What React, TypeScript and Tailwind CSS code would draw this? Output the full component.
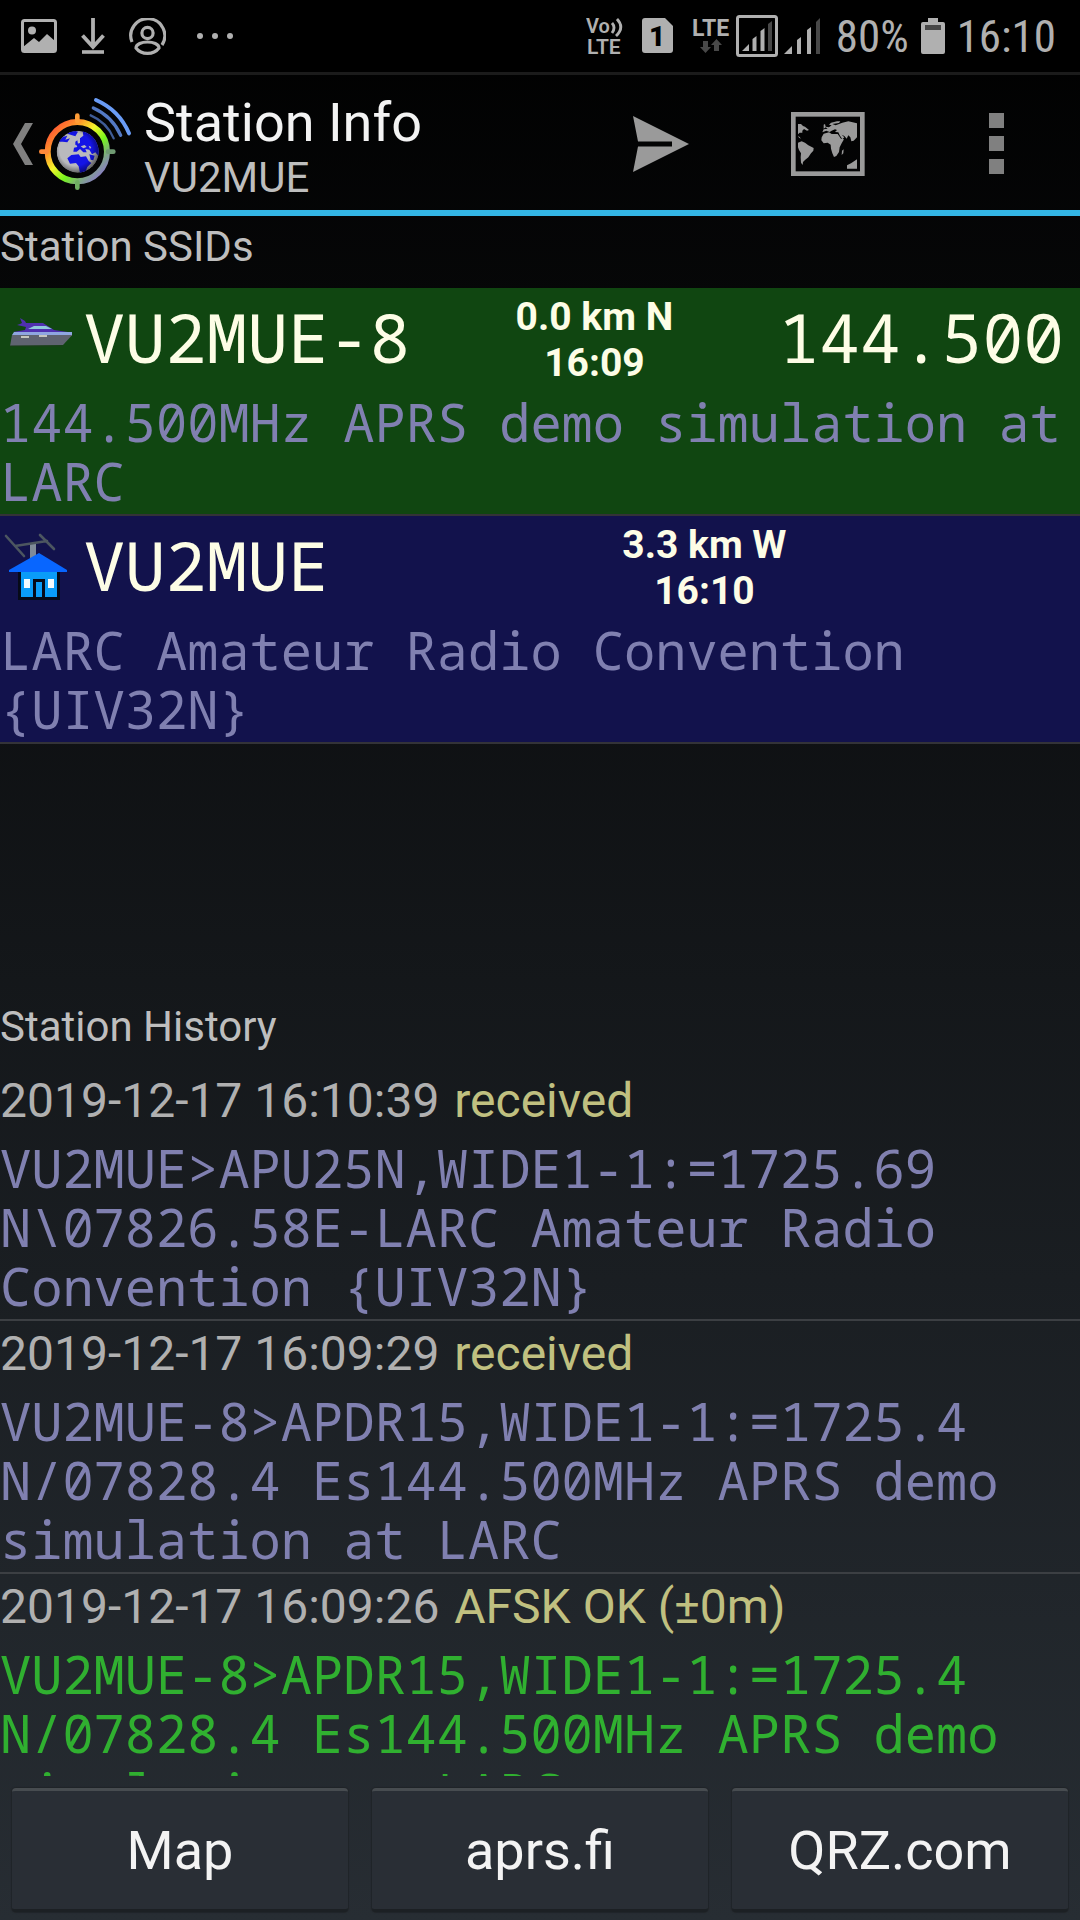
import React from 'react';
import clsx from 'clsx';

interface Station {
    call: string;
    distance: string;
    time: string;
    frequency?: string;
    comment: string;
    icon: React.ReactNode;
    own?: boolean;
}

interface Packet {
    date: string;
    status: string;
    raw: string;
    own?: boolean;
}

const BoatIcon = () => (
    <svg viewBox="0 0 72 72" className="size-[72px] shrink-0" aria-hidden="true">
        <path d="M10 42 L12 31 L74 29 L63 41 Z" fill="#5f6370" />
        <path d="M12 31 L14 28 L72 28 L74 29 L72 31 Z" fill="#8fa6e0" />
        <path d="M13 28 L25 26 L26 23 L17 21 L20 20 L22 19 L20 14 L25 17 L26 19 L43 19 L54 26 L68 28 Z" fill="#5030b0" />
        <path d="M28 25 L34 22 L46 22 L52 25 Z" fill="#8fc8dc" />
        <path d="M21 33 h8 M39 32 h8" stroke="#e8e8d8" strokeWidth="1.4" />
        <path d="M10 42 L63 42" stroke="#1d3a1d" strokeWidth="1" />
    </svg>
);

const HouseIcon = () => (
    <svg viewBox="0 0 72 72" className="size-[72px] shrink-0" aria-hidden="true">
        <rect x="30" y="12" width="6" height="14" fill="#7f8a99" />
        <path d="M6 4 L24 24 M40 3 L54 17 M15 14 L47 9" stroke="#4c5660" strokeWidth="2.6" strokeLinecap="round" fill="none" />
        <rect x="18" y="38" width="42" height="30" fill="#060a18" />
        <rect x="21" y="38" width="36" height="27" fill="#0a9cf8" />
        <path d="M39 21 L67 38 V40 H9 V38 Z" fill="#0866ff" />
        <rect x="24" y="47" width="6" height="9" fill="#f4fbff" />
        <rect x="48" y="47" width="6" height="9" fill="#f4fbff" />
        <path d="M34.500 66 V48.500 H43.500 V66" stroke="#060a18" strokeWidth="3" fill="none" />
    </svg>
);

const AppLogo = () => (
    <svg viewBox="27 45 285 285" className="size-[95px]" aria-hidden="true">
        <defs>
            <linearGradient id="ring" gradientUnits="userSpaceOnUse" x1="70" y1="140" x2="214" y2="284">
                <stop offset="0" stopColor="#ff5a32" />
                <stop offset="0.22" stopColor="#ff9a2a" />
                <stop offset="0.42" stopColor="#f4f52a" />
                <stop offset="0.64" stopColor="#76f51c" />
                <stop offset="0.84" stopColor="#7fa588" />
                <stop offset="1" stopColor="#8a7cc8" />
            </linearGradient>
            <radialGradient id="shade" cx="0.45" cy="0.45" r="0.55">
                <stop offset="0.7" stopColor="#000" stopOpacity="0" />
                <stop offset="1" stopColor="#000" stopOpacity="0.45" />
            </radialGradient>
            <clipPath id="globe">
                <circle cx="143" cy="212" r="63" />
            </clipPath>
        </defs>
        <circle cx="142" cy="212" r="89" fill="none" stroke="url(#ring)" strokeWidth="18" />
        <g strokeWidth="14" strokeLinecap="round">
            <path d="M142 104 V120" stroke="#ff9d38" />
            <path d="M34 212 H50" stroke="#ff8a3a" />
            <path d="M234 212 H250" stroke="#6f9a72" />
            <path d="M142 304 V320" stroke="#6fae62" />
        </g>
        <g clipPath="url(#globe)">
            <circle cx="143" cy="212" r="63" fill="#b9b9bd" />
            <path
                d="M84 182 L98 168 L112 164 L106 176 L120 172 L112 184 L98 182 Z M112 158 L128 148 L144 152 L136 166 L124 162 Z M150 172 L160 164 L158 150 L178 148 L210 178 L212 232 L196 214 L186 220 L178 206 L166 204 L170 214 L160 214 L150 204 L140 212 L130 212 L132 200 L142 198 L138 190 L150 186 Z M136 182 L142 178 L144 190 L136 192 Z M112 232 L124 222 L146 220 L152 228 L168 226 L176 240 L184 246 L172 258 L166 274 L150 276 L146 256 L138 246 L120 248 Z M178 220 L194 224 L190 238 L182 236 Z"
                fill="#1414e6"
            />
            <path d="M152 196 L164 192 L170 198 L160 202 Z M176 194 L184 198 L180 204 Z" fill="#b9b9bd" />
            <circle cx="143" cy="212" r="63" fill="url(#shade)" />
        </g>
        <g fill="none" strokeLinecap="round">
            <path d="M198 57 A190 190 0 0 1 297 157" stroke="#6a9cf6" strokeWidth="12" />
            <path d="M190 81 A160 160 0 0 1 272 163" stroke="#5379c4" strokeWidth="10" />
            <path d="M182 103 A130 130 0 0 1 251 172" stroke="#3f5c96" strokeWidth="7" />
        </g>
    </svg>
);

const StatusBar = () => (
    <div className="flex h-[72px] shrink-0 items-center justify-between bg-black pr-6 pl-[21px] text-[#b0b0b0]">
        <div className="flex items-center gap-6">
            <svg viewBox="0 0 36 36" className="size-9" aria-label="Screenshot saved">
                <rect x="1.500" y="2.500" width="33" height="31" rx="2" fill="none" stroke="currentColor" strokeWidth="3" />
                <circle cx="11" cy="12.500" r="4" fill="currentColor" />
                <path d="M2 29 L13 20 L18 24 L26 16 L34 23 V33 H2 Z" fill="currentColor" />
            </svg>
            <svg viewBox="0 0 24 36" className="h-9 w-6" aria-label="Download">
                <path d="M12 0 V29 M1.500 17.500 L12 29 L22.500 17.500" fill="none" stroke="currentColor" strokeWidth="3.800" />
                <path d="M1 34 H23" stroke="currentColor" strokeWidth="3.600" />
            </svg>
            <svg viewBox="0 0 37 37" className="size-[37px]" aria-label="Contact">
                <g fill="none" stroke="currentColor" strokeWidth="3.200">
                    <path d="M3 24 A17 17 0 1 1 33 27" />
                    <circle cx="18.500" cy="15" r="5.600" />
                    <path d="M7 30 C7 26 13 24 18.500 24 C24 24 30 26 30 30 C27 34 23 35.400 18.500 35.400 C14 35.400 10 34 7 30 Z" />
                </g>
            </svg>
            <svg viewBox="0 0 48 12" className="h-3 w-12" aria-label="More notifications">
                <circle cx="10" cy="6" r="3" fill="currentColor" />
                <circle cx="25" cy="6" r="3" fill="currentColor" />
                <circle cx="40" cy="6" r="3" fill="currentColor" />
            </svg>
        </div>
        <div className="flex items-center font-['Roboto_Condensed',Roboto,sans-serif] text-[45px] leading-none">
            <svg viewBox="0 -6 40 48" className="mr-4 h-12 w-10 font-[Roboto,sans-serif]" aria-label="VoLTE">
                <text x="0" y="15" fontSize="20" fontWeight="600" fill="currentColor">Vo</text>
                <text x="1" y="36" fontSize="21" fontWeight="600" fill="currentColor">LTE</text>
                <path d="M26 5 Q30 9.500 26 15 M31 1 Q39 9.500 30 18" fill="none" stroke="currentColor" strokeWidth="2.800" />
            </svg>
            <svg viewBox="0 -6 32 48" className="mr-[18px] h-12 w-8 font-[Roboto,sans-serif]" aria-label="SIM 1">
                <path d="M3 0 H23 L31 8 V32 Q31 35 28 35 H3 Q0 35 0 32 V3 Q0 0 3 0 Z" fill="currentColor" />
                <text x="7" y="28" fontSize="28" fontWeight="900" fill="#000">1</text>
            </svg>
            <svg viewBox="0 -6 40 48" className="mr-1 h-12 w-10 font-[Roboto,sans-serif]" aria-label="LTE">
                <text x="0" y="18" fontSize="23" fontWeight="700" fill="currentColor">LTE</text>
                <path d="M11 23 H16 V29 H19 L13.500 35 L8 29 H11 Z M22 33 H27 V27 H30 L24.500 21 L19 27 H22 Z" fill="#484848" />
            </svg>
            <svg viewBox="0 0 42 42" className="mr-1.5 size-[42px]" aria-label="Signal, SIM 1">
                <rect x="1.500" y="1.500" width="39" height="39" rx="2" fill="none" stroke="currentColor" strokeWidth="3" />
                <path d="M6 36 L13 29 V36 Z M16.500 36 V24 L20.500 21 V36 Z M24.500 36 V16 L28.500 13 V36 Z" fill="currentColor" />
                <path d="M32 36 V9 L36 6 V36 Z" fill="#484848" />
            </svg>
            <svg viewBox="0 0 36 36" className="mr-4 size-9" aria-label="Signal, SIM 2">
                <path d="M0 36 L8 28 V36 Z M13 36 V22 L17 19 V36 Z M23 36 V12 L27 9 V36 Z" fill="currentColor" />
                <path d="M32 36 V4 L36 0 V36 Z" fill="#484848" />
            </svg>
            <span>80%</span>
            <svg viewBox="0 0 24 36" className="mx-3 h-9 w-6" aria-label="Battery">
                <path d="M7 0 H17 V4 H22 Q24 4 24 6 V34 Q24 36 22 36 H2 Q0 36 0 34 V6 Q0 4 2 4 H7 Z" fill="currentColor" />
                <rect x="4" y="7" width="16" height="5" fill="#484848" />
            </svg>
            <span>16:10</span>
        </div>
    </div>
);

const ActionBar = () => (
    <header className="flex h-36 shrink-0 items-center border-t-[3px] border-b-[6px] border-t-[#1b1b1b] border-b-[#33b5e5]">
        <button type="button" aria-label="Navigate up" className="flex items-center pt-0.5 pl-3">
            <svg viewBox="0 0 22 42" className="h-[42px] w-[22px]">
                <path d="M13 0 H21 L9 21 L21 42 H13 L1 21 Z" fill="#808080" />
            </svg>
            <span className="ml-[5px]">
                <AppLogo />
            </span>
        </button>
        <div className="flex-1 pt-2 pl-2.5">
            <h1 className="text-[54px] leading-[61px] text-[#f3f3f3]">Station Info</h1>
            <p className="text-[42px] leading-[49px] text-[#bebebe]">VU2MUE</p>
        </div>
        <button type="button" aria-label="Send message" className="flex w-[168px] justify-center pt-0.5 pl-0.5">
            <svg viewBox="0 0 56 56" className="size-14">
                <path d="M0 0 L56 28 L0 56 L5 30.500 H39 V25.500 H5 Z" fill="#9a9a9a" />
            </svg>
        </button>
        <button type="button" aria-label="Show on map" className="flex w-[168px] justify-center pt-0.5">
            <svg viewBox="36 36 222 192" className="h-16 w-[74px]" fill="#9a9a9a">
                <rect x="43" y="43" width="207" height="178" fill="none" stroke="#9a9a9a" strokeWidth="14" />
                <path d="M57 72 L66 72 L72 78 L78 80 L90 90 L84 92 L75 87 L70 92 L70 98 L62 98 L57 103 Z M57 107 L62 111 L66 116 L60 113 Z" />
                <path d="M57 128 L68 124 L78 128 L88 136 L104 144 L103 152 L96 160 L88 172 L78 180 L72 186 L71 195 L66 188 L65 172 L66 160 L60 150 L57 142 Z" />
                <path d="M128 112 L134 101 L150 97 L158 102 L176 102 L186 116 L195 118 L188 130 L182 142 L180 156 L172 168 L165 171 L160 160 L156 146 L155 134 L146 128 L134 130 L127 121 Z M189 152 L194 148 L193 160 L188 165 Z" />
                <path d="M130 97 L134 88 L146 86 L140 82 L134 86 L134 74 L138 72 L140 80 L150 82 L158 76 L150 74 L156 68 L174 64 L184 64 L180 69 L160 72 L170 76 L190 68 L208 64 L234 70 L234 112 L224 122 L217 124 L214 112 L208 106 L203 116 L196 108 L188 104 L196 112 L190 118 L182 106 L178 97 L168 96 L174 90 L168 88 L158 92 L152 96 L142 92 Z" />
                <path d="M204 196 L216 190 L234 178 V206 H204 Z" />
            </svg>
        </button>
        <button type="button" aria-label="More options" className="flex w-[168px] flex-col items-center gap-2 pt-0.5">
            <span className="size-[15px] bg-[#808080]" />
            <span className="size-[15px] bg-[#808080]" />
            <span className="size-[15px] bg-[#808080]" />
        </button>
    </header>
);

const STATIONS: Station[] = [
    {
        call: 'VU2MUE-8',
        distance: '0.0 km N',
        time: '16:09',
        frequency: '144.500',
        comment: '144.500MHz APRS demo simulation at\nLARC',
        icon: <BoatIcon />,
        own: true,
    },
    {
        call: 'VU2MUE',
        distance: '3.3 km W',
        time: '16:10',
        comment: 'LARC Amateur Radio Convention\n{UIV32N}',
        icon: <HouseIcon />,
    },
];

const PACKETS: Packet[] = [
    {
        date: '2019-12-17 16:10:39',
        status: 'received',
        raw: 'VU2MUE>APU25N,WIDE1-1:=1725.69\nN\\07826.58E-LARC Amateur Radio\nConvention {UIV32N}',
    },
    {
        date: '2019-12-17 16:09:29',
        status: 'received',
        raw: 'VU2MUE-8>APDR15,WIDE1-1:=1725.4\nN/07828.4 Es144.500MHz APRS demo\nsimulation at LARC',
    },
    {
        date: '2019-12-17 16:09:26',
        status: 'AFSK OK (±0m)',
        raw: 'VU2MUE-8>APDR15,WIDE1-1:=1725.4\nN/07828.4 Es144.500MHz APRS demo\nsimulation at LARC',
        own: true,
    },
];

const MONO = "font-['Noto_Sans_Mono','DejaVu_Sans_Mono',monospace]";

const StationRow: React.FC<{ station: Station }> = ({ station }) => (
    <li className={clsx('border-b-2 border-[#333338]', station.own ? 'bg-[#104611]' : 'bg-[#12124c]')}>
        <div className="flex h-[104px] items-center text-[#fdfde6]">
            {station.icon}
            <span className={clsx(MONO, 'ml-3 pb-1.5 text-[68px] leading-[80px]')}>{station.call}</span>
            <div className="flex-1 text-center text-[39px] leading-[46px] font-bold">
                <p>{station.distance}</p>
                <p>{station.time}</p>
            </div>
            {station.frequency && (
                <span className={clsx(MONO, 'mr-4 pb-1.5 text-[68px] leading-[80px]')}>{station.frequency}</span>
            )}
        </div>
        <p className={clsx(MONO, 'pb-1 text-[52px] leading-[59px] whitespace-pre text-[#8080b0]')}>{station.comment}</p>
    </li>
);

const PacketRow: React.FC<{ packet: Packet }> = ({ packet }) => (
    <li className="border-b-2 border-[#3c3f43] pb-1">
        <p className="mb-1 text-[48px] leading-[66px] text-[#b0b0b0]">
            {packet.date} <span className="ml-[3px] text-[#c0c080]">{packet.status}</span>
        </p>
        <p
            className={clsx(
                MONO,
                'text-[52px] leading-[59px] whitespace-pre',
                packet.own ? 'text-[#30b030]' : 'text-[#8080b0]'
            )}
        >
            {packet.raw}
        </p>
    </li>
);

const SectionTitle: React.FC<{ children: React.ReactNode }> = ({ children }) => (
    <h2 className="h-[72px] shrink-0 pt-1.5 text-[42px] leading-[49px] text-[#bebebe]">{children}</h2>
);

export default function App() {
    return (
        <main className="flex h-screen flex-col overflow-hidden bg-[linear-gradient(#000,#272d33)] font-[Roboto,sans-serif]">
            <StatusBar />
            <ActionBar />
            <SectionTitle>Station SSIDs</SectionTitle>
            <ul className="min-h-0 flex-1 overflow-hidden">
                {STATIONS.map((station) => (
                    <StationRow key={station.call} station={station} />
                ))}
            </ul>
            <SectionTitle>Station History</SectionTitle>
            <ul className="min-h-0 flex-1 overflow-hidden">
                {PACKETS.map((packet) => (
                    <PacketRow key={packet.date} packet={packet} />
                ))}
            </ul>
            <nav className="grid shrink-0 grid-cols-3 gap-6 px-3 pt-3 pb-2">
                {['Map', 'aprs.fi', 'QRZ.com'].map((label) => (
                    <button
                        key={label}
                        type="button"
                        className="h-[124px] rounded-sm border-t-[3px] border-b-[3px] border-t-[#474c50] border-b-[#1c2024] bg-[#292e35] text-[54px] text-[#f3f3f3] shadow-[0_0_1px_1px_#202428]"
                    >
                        {label}
                    </button>
                ))}
            </nav>
        </main>
    );
}
